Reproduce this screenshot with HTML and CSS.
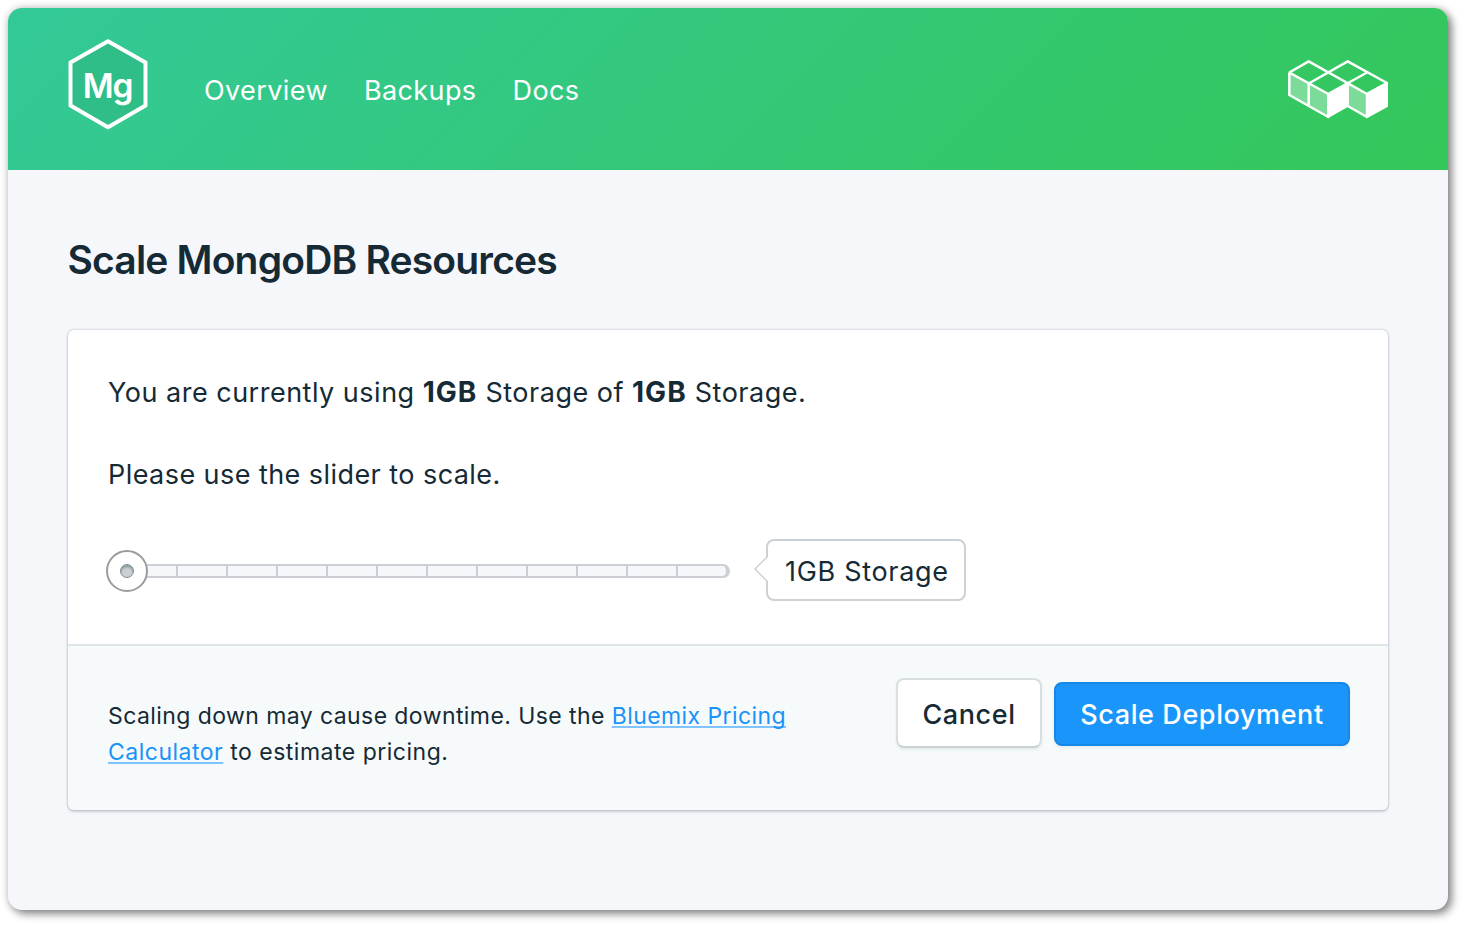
FILE: index.html
```html
<!DOCTYPE html>
<html lang="en">
<head>
<meta charset="utf-8">
<title>Scale MongoDB Resources</title>
<link rel="stylesheet" href="styles.css">
</head>
<body>
<div class="window">
  <header class="topbar">
    <svg class="logo" width="84" height="94" viewBox="0 0 84 94">
      <path d="M42 4.300 79.500 25.500V68.500L42 90.300 4.500 68.500V25.500Z" fill="#2fbe87" stroke="#fff" stroke-width="4" stroke-linejoin="round"/>
      <text class="logo-text" x="41.500" y="60.500" text-anchor="middle">Mg</text>
    </svg>
    <nav class="nav">
      <a class="nav-overview">Overview</a>
      <a class="nav-backups">Backups</a>
      <a class="nav-docs">Docs</a>
    </nav>
    <svg class="cubes" width="104" height="62" viewBox="0 0 104 62" stroke-linejoin="round">
      <path d="M3.300 14.500 22.700 25.700V48.300L3.300 37Z M22.700 25.700 42.300 36V59.300L22.700 48Z M61.700 25.500 81 36V59.300L61.700 48Z" fill="#fff" fill-opacity=".36"/>
      <path d="M42.300 36 61.700 25V48L42.300 59Z M81 36 101 25V48L81 59Z" fill="#fff" stroke="#fff" stroke-width="2"/>
      <path d="M3.300 14.500 22.700 3.300 81 36M3.300 14.500 42.300 36 81 14.500M22.700 25.500 61.700 3.300 101 25 81 36M3.300 14.500V37L42.300 59V36M22.700 25.500V48M61.700 25V48L81 59V36" fill="none" stroke="#fff" stroke-width="2.500"/>
    </svg>
  </header>
  <main class="content">
    <h1 class="title">Scale MongoDB Resources</h1>
    <section class="card">
      <div class="card-body">
        <p class="line usage">You are currently using <b>1GB</b> Storage of <b>1GB</b> Storage.</p>
        <p class="line hint">Please use the slider to scale.</p>
        <div class="scale-row">
          <div class="slider">
            <div class="thumb"><span class="dot"></span></div>
            <div class="track"></div>
          </div>
          <div class="value"><span>1GB Storage</span>
            <svg class="arrow" width="16" height="30" viewBox="0 0 16 30"><path d="M15 2 2 15 15 28" fill="#fff" stroke="#ccd1d5" stroke-width="1.500"/></svg>
          </div>
        </div>
      </div>
      <footer class="card-footer">
        <p class="note"><span class="note-a">Scaling down may cause downtime. Use the <a class="link">Bluemix Pricing</a></span><br><span class="note-b"><a class="link">Calculator</a> to estimate pricing.</span></p>
        <div class="actions">
          <button class="btn cancel">Cancel</button>
          <button class="btn primary">Scale Deployment</button>
        </div>
      </footer>
    </section>
  </main>
</div>
</body>
</html>
```
FILE: styles.css
```css
* { box-sizing: border-box; }
body {
  margin: 0;
  padding: 8px 16px 16px 8px;
  height: 926px;
  background: #fff;
  color: #152a35;
  font-family: Inter, "Liberation Sans", sans-serif;
}
.window {
  width: 1440px;
  height: 902px;
  border-radius: 14px;
  overflow: hidden;
  background: #f5f7fb;
  box-shadow: 4px 4px 9px rgba(0, 0, 0, .42), 0 0 8px rgba(0, 0, 0, .2);
}
.topbar {
  display: flex;
  align-items: flex-start;
  height: 162px;
  padding: 0 58px;
  background: linear-gradient(135deg, #33c998 0%, #34c759 100%);
  color: #fff;
}
.logo { margin-top: 29px; }
.logo-text { font-size: 33.5px; font-weight: 600; letter-spacing: -1.2px; fill: #fff; }
.nav {
  display: flex;
  gap: 36px;
  margin: 63px 0 0 54px;
  font-size: 27px;
  line-height: 40px;
  font-weight: 400;
  letter-spacing: .4px;
}
.cubes { margin: 50px 0 0 auto; }
.content { padding: 65px 60px 0; }
.title {
  margin: 0 0 45px -.5px;
  font-size: 39px;
  line-height: 50px;
  height: 50px;
  font-weight: 600;
  letter-spacing: -.82px;
  white-space: nowrap;
}
.card {
  height: 480px;
  border-radius: 6px;
  background: #fff;
  box-shadow: 0 0 0 1.500px rgba(21, 42, 53, .09), 0 2px 3px rgba(21, 42, 53, .16);
}
.card-body {
  height: 314px;
  padding: 43px 40px 0;
}
.line {
  margin: 0 0 42px;
  font-size: 27px;
  line-height: 40px;
  white-space: nowrap;
  letter-spacing: .5px;
}
.line b { font-size: 28px; letter-spacing: 1px; line-height: 1; }
.hint { letter-spacing: .44px; }
.scale-row { display: flex; align-items: center; height: 62px; margin-top: 44px; }
.slider { display: flex; align-items: center; width: 624px; height: 42px; margin: 2px 0 0 -2px; }
.thumb {
  position: relative;
  z-index: 1;
  display: flex;
  align-items: center;
  justify-content: center;
  flex: none;
  width: 42px;
  height: 42px;
  border: 2px solid #9a9c9e;
  border-radius: 50%;
  background: #fff;
}
.dot {
  width: 14px;
  height: 14px;
  border-radius: 50%;
  border: 1px solid #7f8d95;
  background: #cbd0d3;
  box-shadow: inset 0 2px 2px rgba(21, 42, 53, .35);
}
.track {
  flex: 1;
  height: 14px;
  margin-left: -2px;
  border: 2px solid #ccd0d4;
  border-left: 0;
  border-right-width: 4px;
  border-radius: 0 7px 7px 0;
  background: repeating-linear-gradient(90deg, #c8ced2 0 2px, transparent 2px 50px) 30px 0 / 546px 10px no-repeat #f5f7fb;
}
.value {
  position: relative;
  width: 200px;
  height: 62px;
  margin-left: 36px;
  padding-left: 17px;
  border: 2px solid #ccd1d5;
  border-radius: 8px;
  font-size: 27px;
  line-height: 61px;
  letter-spacing: .7px;
  white-space: nowrap;
}
.arrow { position: absolute; left: -15px; top: 13px; }
.card-footer {
  display: flex;
  justify-content: space-between;
  height: 166px;
  padding: 32px 38px 0 40px;
  border-top: 2px solid #dfe4e7;
  border-radius: 0 0 6px 6px;
  background: #f6fafb;
}
.note {
  margin: 20px 0 0;
  font-size: 23px;
  line-height: 36px;
  letter-spacing: .5px;
  white-space: nowrap;
}
.note-a { letter-spacing: .42px; }
.link {
  color: #1a93f8;
  text-decoration: underline;
  text-decoration-color: #7fc4ff;
  text-decoration-thickness: 2px;
  text-underline-offset: 2px;
  text-decoration-skip-ink: none;
}
.actions { display: flex; gap: 12px; align-items: flex-start; }
.btn {
  padding: 0;
  font-family: inherit;
  font-size: 27px;
  font-weight: 500;
  letter-spacing: .6px;
  border-radius: 8px;
  white-space: nowrap;
}
.cancel {
  width: 146px;
  height: 70px;
  padding-top: 2px;
  border: 2px solid #d9dee1;
  border-bottom-color: #cad0d4;
  background: #fff;
  color: #152a35;
  box-shadow: 0 2px 3px rgba(21, 42, 53, .07);
}
.primary {
  width: 296px;
  height: 64px;
  margin-top: 4px;
  border: 2px solid #1787e6;
  background: #1a96fb;
  color: #fff;
  box-shadow: 0 2px 3px rgba(21, 42, 53, .06);
}
```
